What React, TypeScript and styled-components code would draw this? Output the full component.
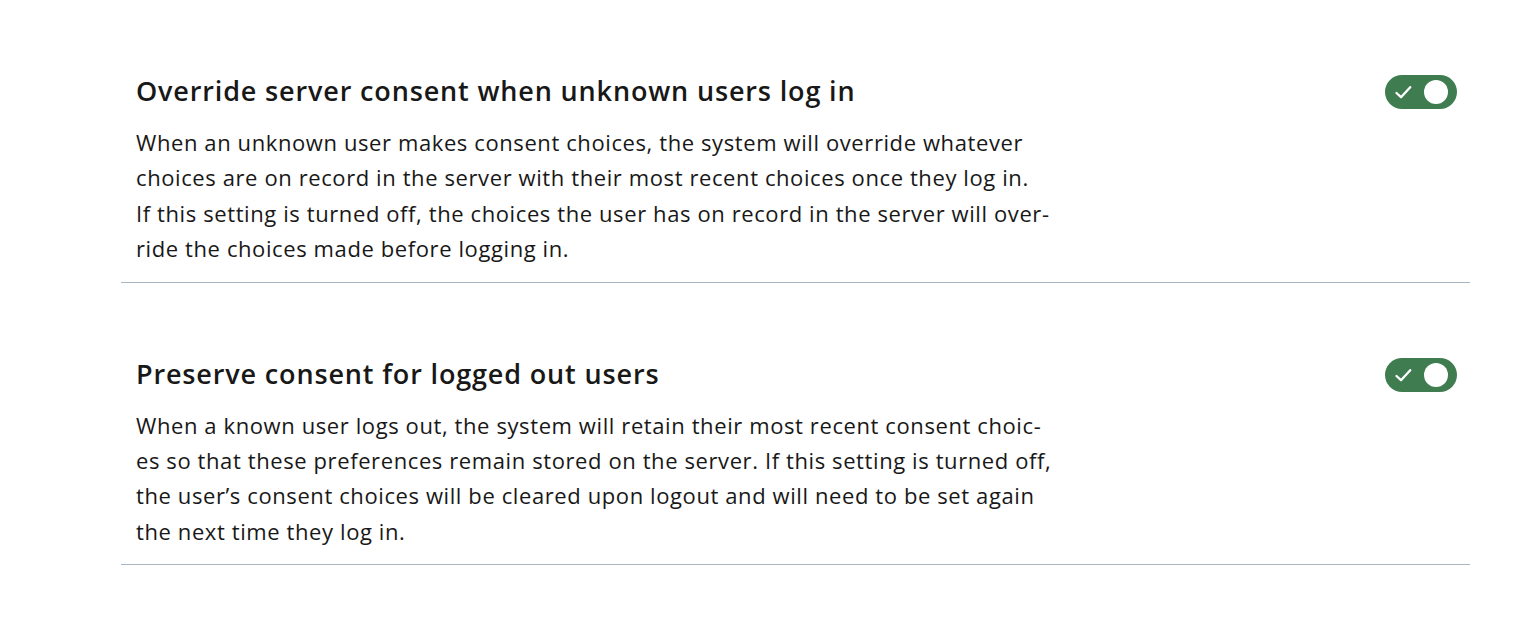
import React from "react";
import styled, { createGlobalStyle } from "styled-components";

const GlobalStyle = createGlobalStyle`
  html, body { margin: 0; padding: 0; background: #ffffff; }
  body { font-family: "Open Sans", "Noto Sans", sans-serif; color: #181818; }
`;

const Page = styled.div`
  width: 1349px;
  padding-left: 121px;
`;

const Row = styled.section`
  display: flex;
  justify-content: space-between;
  align-items: flex-start;
  padding: 75px 13px 15px 15px;
  border-bottom: 1px solid #aab5c2;
`;

const TextCol = styled.div`
  display: flex;
  flex-direction: column;
`;

const Title = styled.h2`
  margin: 0 0 18px 0;
  font-size: 27px;
  line-height: 32px;
  font-weight: 600;
  color: #181818;
  letter-spacing: 0.85px;
`;

const Description = styled.p`
  margin: 0;
  font-size: 22px;
  line-height: 35.4px;
  font-weight: 400;
  color: #181818;
  letter-spacing: 0.6px;
  white-space: nowrap;
`;

const Toggle = styled.button<{ $on: boolean }>`
  position: relative;
  width: 72px;
  height: 34px;
  border: none;
  border-radius: 17px;
  padding: 0;
  margin: 0;
  background: ${(p) => (p.$on ? "#3f7d50" : "#c9c9c9")};
  cursor: pointer;
  flex-shrink: 0;
`;

const Knob = styled.span<{ $on: boolean }>`
  position: absolute;
  top: 5px;
  ${(p) => (p.$on ? "right: 9px;" : "left: 9px;")}
  width: 24px;
  height: 24px;
  border-radius: 50%;
  background: #ffffff;
`;

const Check = styled.svg`
  position: absolute;
  left: 10px;
  top: 10px;
`;

type Setting = { title: string; lines: string[] };

const settings: Setting[] = [
  {
    title: "Override server consent when unknown users log in",
    lines: [
      "When an unknown user makes consent choices, the system will override whatever",
      "choices are on record in the server with their most recent choices once they log in.",
      "If this setting is turned off, the choices the user has on record in the server will over-",
      "ride the choices made before logging in.",
    ],
  },
  {
    title: "Preserve consent for logged out users",
    lines: [
      "When a known user logs out, the system will retain their most recent consent choic-",
      "es so that these preferences remain stored on the server. If this setting is turned off,",
      "the user\u2019s consent choices will be cleared upon logout and will need to be set again",
      "the next time they log in.",
    ],
  },
];

function Switch({ on }: { on: boolean }) {
  return (
    <Toggle $on={on} role="switch" aria-checked={on}>
      {on && (
        <Check width="17" height="15" viewBox="0 0 17 15" fill="none">
          <path
            d="M1.5 8 L6 12.2 L15.2 2.2"
            stroke="#ffffff"
            strokeWidth="2.3"
            strokeLinecap="round"
            strokeLinejoin="round"
          />
        </Check>
      )}
      <Knob $on={on} />
    </Toggle>
  );
}

export default function App() {
  return (
    <>
      <GlobalStyle />
      <Page>
        {settings.map((s) => (
          <Row key={s.title}>
            <TextCol>
              <Title>{s.title}</Title>
              <Description>
                {s.lines.map((l, i) => (
                  <React.Fragment key={i}>
                    {l}
                    {i < s.lines.length - 1 && <br />}
                  </React.Fragment>
                ))}
              </Description>
            </TextCol>
            <Switch on={true} />
          </Row>
        ))}
      </Page>
    </>
  );
}
